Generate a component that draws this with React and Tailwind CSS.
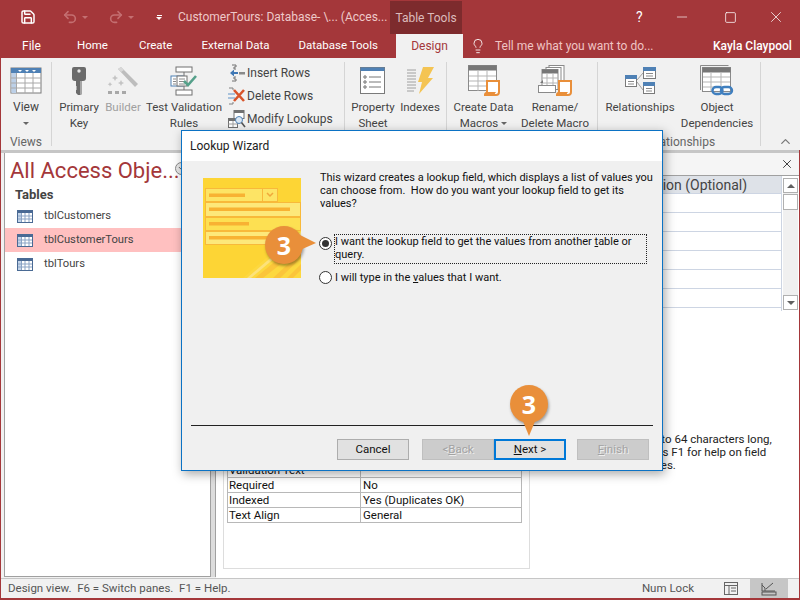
import React from 'react';
import { X, ChevronUp, ChevronLeft, Lightbulb, Minus, Square, Save, Undo2, Redo2 } from 'lucide-react';

const tabs = [
  { name: 'Home', className: 'ml-[37px]' },
  { name: 'Create', className: 'ml-[31px]' },
  { name: 'External Data', className: 'ml-[29px]' },
  { name: 'Database Tools', className: 'ml-[29px]' },
];

const fieldRows = ['', '', '', '', '', ''];

const propertyRows = [
  { label: 'Validation Text', value: '' },
  { label: 'Required', value: 'No' },
  { label: 'Indexed', value: 'Yes (Duplicates OK)' },
  { label: 'Text Align', value: 'General' },
];

const navItems = [
  { name: 'tblCustomers', active: false },
  { name: 'tblCustomerTours', active: true },
  { name: 'tblTours', active: false },
];

const TableIcon = () => (
  <svg width="32" height="28" viewBox="0 0 32 28">
    <rect x="1" y="1" width="30" height="25" fill="#fff" stroke="#7a7a7a" />
    <rect x="1" y="1" width="30" height="5" fill="#4f81b5" />
    <rect x="1.5" y="6" width="5" height="20" fill="#bcd0e8" />
    <path d="M1 11h30M1 16h30M1 21h30M6.500 6v20M15 6v20M23 6v20" stroke="#a8a8a8" fill="none" />
    <path d="M8 3h4l-2 2zM15 3h4l-2 2zM22 3h4l-2 2z" fill="#fff" />
  </svg>
);

const KeyIcon = () => (
  <svg width="16" height="30" viewBox="0 0 16 30">
    <path d="M3 1h10a2 2 0 0 1 2 2v9a3 3 0 0 1-3 3h-1v13l-2 1H7l-2-2v-3l1-1-1-1 1-1-1-1V15H4a3 3 0 0 1-3-3V3a2 2 0 0 1 2-2z" fill="#6b6b6b" />
    <circle cx="8" cy="5" r="1.700" fill="#e8e8e8" />
    <path d="M9 15h2v13l-2 1z" fill="#a6a6a6" />
  </svg>
);

const BuilderIcon = () => (
  <svg width="32" height="30" viewBox="0 0 32 30">
    <path d="M11 3l3-2 17 17-3 3z" fill="#bdbdbd" />
    <path d="M11 3l3-2 3 3-3 2z" fill="#d8d8d8" />
    <path d="M8 9l1 2 2 1-2 1-1 2-1-2-2-1 2-1zM14 14l1 2 2 1-2 1-1 2-1-2-2-1 2-1zM3 16l.8 1.500 1.500.8-1.500.8-.8 1.500-.8-1.500-1.500-.8 1.500-.8z" fill="#c4c4c4" />
    <rect x="1" y="25" width="4" height="3" fill="#a8a8a8" />
    <rect x="8" y="25" width="4" height="3" fill="#a8a8a8" />
    <rect x="15" y="25" width="4" height="3" fill="#a8a8a8" />
  </svg>
);

const ValidationIcon = () => (
  <svg width="28" height="30" viewBox="0 0 28 30">
    <rect x="6" y="1" width="16" height="5" fill="#fff" stroke="#707070" />
    <rect x="6" y="24" width="16" height="5" fill="#fff" stroke="#707070" />
    <path d="M14 6v18" stroke="#707070" />
    <rect x="1" y="10" width="12" height="10" fill="#fff" stroke="#4f81b5" />
    <rect x="7" y="10" width="10" height="10" fill="#fff" stroke="#707070" />
    <path d="M3 13h3M3 15.500h3M3 18h3M9 13h6M9 15.500h6M9 18h6" stroke="#8a8a8a" />
    <path d="M14 15l4 4 8-9" fill="none" stroke="#55a08a" strokeWidth="2.600" />
  </svg>
);

const InsertRowsIcon = () => (
  <svg width="16" height="18" viewBox="0 0 16 18">
    <path d="M3 1H7V3H5V5H7M3 17H7V15H5V13H7" fill="none" stroke="#707070" />
    <path d="M1 9l4-3.500V8h4v2H5v2.500z" fill="#3f78b5" />
    <rect x="10" y="8" width="6" height="2.500" fill="#8a8a8a" />
  </svg>
);

const DeleteRowsIcon = () => (
  <svg width="18" height="18" viewBox="0 0 18 18">
    <path d="M1 1h4M1 17h4M5 1v2M5 15v2" fill="none" stroke="#808080" />
    <rect x="0" y="6" width="7" height="2" fill="#a8c2dc" />
    <rect x="0" y="10" width="7" height="2" fill="#a8c2dc" />
    <path d="M6 3l10 11M16 3L6 14" stroke="#d8552b" strokeWidth="2.600" />
  </svg>
);

const ModifyLookupsIcon = () => (
  <svg width="18" height="18" viewBox="0 0 18 18">
    <rect x="6" y="0.500" width="10" height="8" fill="#fff" stroke="#707070" />
    <rect x="6" y="0.500" width="10" height="2.500" fill="#707070" />
    <rect x="0.500" y="8.500" width="9" height="9" fill="#fff" stroke="#707070" />
    <rect x="0.500" y="8.500" width="9" height="2.500" fill="#707070" />
    <path d="M0.500 14h9M5 11v6" stroke="#a0a0a0" />
    <circle cx="11" cy="10" r="3.500" fill="#dbe7f3" stroke="#4f81b5" />
    <path d="M13.500 12.500L17 17" stroke="#555" strokeWidth="1.600" />
  </svg>
);

const PropertySheetIcon = () => (
  <svg width="26" height="28" viewBox="0 0 26 28">
    <rect x="0.500" y="0.500" width="24" height="26" fill="#fff" stroke="#7a7a7a" />
    <rect x="0.500" y="0.500" width="24" height="3.500" fill="#4f81b5" />
    <circle cx="5" cy="10" r="1.200" fill="none" stroke="#666" />
    <circle cx="5" cy="15" r="1.200" fill="none" stroke="#666" />
    <circle cx="5" cy="20" r="1.200" fill="none" stroke="#666" />
    <path d="M9 10h12M9 15h12M9 20h12" stroke="#777" />
  </svg>
);

const IndexesIcon = () => (
  <svg width="28" height="30" viewBox="0 0 28 30">
    <path d="M1 4h9M1 7h9M1 10h9M1 13h9M1 16h9M1 19h9M1 22h9M1 25h7" stroke="#a0a0a0" />
    <path d="M17 1h11l-6 11h5L13 28l3-12h-4z" fill="#f4c453" />
  </svg>
);

const Scroll = () => (
  <>
    <path d="M3 0h12v11a3 3 0 0 1-3 3H1a2 2 0 0 1 2-2z" fill="#fff" stroke="#e98f3a" strokeWidth="2" />
    <path d="M0 14h10l2-3H2z" fill="#e98f3a" />
  </>
);

const CreateMacroIcon = () => (
  <svg width="32" height="32" viewBox="0 0 32 32">
    <rect x="0.500" y="0.500" width="28" height="25" fill="#fff" stroke="#8a8a8a" />
    <rect x="0.500" y="0.500" width="28" height="5" fill="#777" />
    <path d="M1 11h27M1 16h27M1 21h27M10 6v20M19 6v20" stroke="#b5b5b5" />
    <g transform="translate(16 16)"><Scroll /></g>
  </svg>
);

const RenameMacroIcon = () => (
  <svg width="34" height="32" viewBox="0 0 34 32">
    <rect x="11" y="0.500" width="15" height="22" fill="#fff" stroke="#8a8a8a" />
    <rect x="8" y="2.500" width="15" height="22" fill="#fff" stroke="#8a8a8a" />
    <rect x="4" y="4.500" width="16" height="20" fill="#fff" stroke="#8a8a8a" />
    <rect x="4" y="4.500" width="16" height="4" fill="#777" />
    <path d="M4 13h16M4 18h16M9 9v16M15 9v16" stroke="#b5b5b5" />
    <rect x="0.500" y="20.500" width="17" height="7" fill="#fff" stroke="#8a8a8a" />
    <path d="M2 18l3-3v3z" fill="#777" />
    <g transform="translate(18 16)"><Scroll /></g>
  </svg>
);

const MiniTable = ({ x, y, w, h }) => (
  <g>
    <rect x={x + 0.5} y={y + 0.5} width={w} height={h} fill="#fff" stroke="#7a7a7a" />
    <rect x={x + 0.5} y={y + 0.5} width={w} height="3" fill="#4f81b5" stroke="#4f81b5" />
    <path d={`M${x + 3} ${y + 6.5}h${w - 5}M${x + 3} ${y + 9}h${w - 5}`} stroke="#8a8a8a" />
  </g>
);

const RelationshipsIcon = () => (
  <svg width="32" height="28" viewBox="0 0 32 28">
    <path d="M13 13L19 6M13 15l6 8" stroke="#a0a0a0" fill="none" />
    <MiniTable x={1} y={8} w={11} h={11} />
    <MiniTable x={19} y={0} w={12} h={11} />
    <MiniTable x={19} y={15} w={11} h={11} />
  </svg>
);

const DependenciesIcon = () => (
  <svg width="34" height="31" viewBox="0 0 34 31">
    <path d="M0.500 25V0.500h28" fill="none" stroke="#8a8a8a" />
    <rect x="2.500" y="2.500" width="28" height="24" fill="#fff" stroke="#8a8a8a" />
    <rect x="2.500" y="2.500" width="28" height="5" fill="#777" />
    <path d="M3 12h27M3 17h27M3 22h27M11 8v18M21 8v18" stroke="#b5b5b5" />
    <rect x="12.500" y="22" width="10" height="7" rx="3.500" fill="none" stroke="#3f7fbf" strokeWidth="2.400" />
    <rect x="21" y="22" width="11" height="7" rx="3.500" fill="none" stroke="#3f7fbf" strokeWidth="2.400" />
  </svg>
);

const NavTableIcon = () => (
  <svg width="16" height="13" viewBox="0 0 16 13">
    <rect x="0.500" y="0.500" width="15" height="12" fill="#fff" stroke="#4a6a94" />
    <rect x="0.500" y="0.500" width="15" height="2.500" fill="#4a6a94" />
    <rect x="1" y="3" width="3" height="9" fill="#c4d5ea" />
    <path d="M1 6h14M1 9h14M4.500 3v9M8 3v9M12 3v9" stroke="#8aa3c4" />
  </svg>
);

const RibbonButton = ({ width, icon, lines, disabled, caret }) => (
  <div className={`${width} flex flex-col items-center`}>
    <div className="h-[37px] flex items-center justify-center">{icon}</div>
    <div className={`text-center text-[11.500px] leading-[16px] whitespace-nowrap ${disabled ? 'text-[#a0a0a0]' : 'text-[#444]'}`}>
      {lines.map((line, i) => (
        <div key={i}>
          {line}
          {caret && i === lines.length - 1 && (
            <span className="inline-block ml-[3px] mb-[2px] w-0 h-0 border-x-[3px] border-x-transparent border-t-[3px] border-t-[#666]" />
          )}
        </div>
      ))}
    </div>
  </div>
);

const SmallButton = ({ icon, label }) => (
  <div className="h-[23px] flex items-center gap-[1px]">
    <div className="w-[18px] flex justify-center">{icon}</div>
    <span className="text-[12px] text-[#444] whitespace-nowrap">{label}</span>
  </div>
);

const Group = ({ width, label, children }) => (
  <div className={`${width} relative flex shrink-0 items-start border-r border-[#d5d5d5] my-[4px] h-[84px]`}>
    {children}
    {label && <div className="absolute bottom-[-4px] left-0 right-0 text-center text-[12px] leading-[16px] text-[#666]">{label}</div>}
  </div>
);

const Radio = ({ checked }) => (
  <span className="w-[13px] h-[13px] rounded-full border border-[#333] bg-white flex items-center justify-center shrink-0">
    {checked && <span className="w-[7px] h-[7px] rounded-full bg-[#333]" />}
  </span>
);

const DialogButton = ({ children, variant }) => {
  const styles = {
    normal: 'bg-[#e1e1e1] border border-[#adadad] text-[#111]',
    disabled: 'bg-[#cccccc] border border-[#bfbfbf] text-[#a3a3a3] [text-shadow:1px_1px_0_#eee]',
    focus: 'bg-[#e1e1e1] border-2 border-[#0078d7] text-[#111]',
  };
  return (
    <div className={`w-[72px] h-[21px] flex items-center justify-center text-[11.500px] ${styles[variant]}`}>{children}</div>
  );
};

// wizard art on the left of the dialog
const WizardArt = () => (
  <svg width="98" height="100" viewBox="0 0 98 100" className="shrink-0">
    <rect width="98" height="100" fill="#fdd535" />
    <path d="M98 50v50H40z" fill="#fdd83f" />
    <path d="M98 62L52 100h8l38-30zM98 74L70 100h7l21-20zM98 86L84 100h6l8-8z" fill="#fbc53a" />
    <path d="M98 54L44 100h4l50-42z" fill="#fde27a" />
    <rect x="2.500" y="10.500" width="57" height="13" fill="#fde465" stroke="#f8b93a" />
    <rect x="59.500" y="10.500" width="15" height="13" fill="#fde465" stroke="#f8b93a" />
    <path d="M64 15l3 3 3-3" fill="none" stroke="#f0a83a" strokeWidth="1.500" />
    <rect x="6" y="15.500" width="36" height="3.500" fill="#f8b233" />
    <rect x="2.500" y="24.500" width="95" height="14" fill="#fde87a" stroke="#f8b93a" />
    <rect x="6" y="29.500" width="81" height="3.500" fill="#f8b233" />
    <rect x="2.500" y="39.500" width="95" height="13" fill="#fde052" stroke="#f8b93a" />
    <rect x="6" y="44" width="40" height="3.500" fill="#f8b233" />
    <rect x="2.500" y="53.500" width="80" height="13" fill="#fde87a" stroke="#f8b93a" />
    <rect x="6" y="58" width="60" height="3.500" fill="#f8b233" />
  </svg>
);

const Badge = () => (
  <div className="w-[38px] h-[38px] rounded-full bg-[#e98f3a] flex items-center justify-center text-white text-[25px] font-bold font-['Open_Sans',sans-serif] leading-none shadow-[1px_2px_3px_rgba(0,0,0,0.35)]">
    3
  </div>
);

export default function App() {
  return (
    <div className="relative w-[800px] h-[600px] overflow-hidden bg-[#a4373a] flex flex-col font-['Roboto',sans-serif]">
      {/* Title bar */}
      <div className="h-[34px] flex items-center shrink-0 relative">
        <Save size={16} className="ml-[20px] text-white" strokeWidth={2.2} />
        <Undo2 size={16} className="ml-[26px] text-[#c46f71]" strokeWidth={2.4} />
        <span className="ml-[4px] w-0 h-0 border-x-[3px] border-x-transparent border-t-[3px] border-t-[#c46f71]" />
        <Redo2 size={16} className="ml-[20px] text-[#c46f71]" strokeWidth={2.4} />
        <span className="ml-[4px] w-0 h-0 border-x-[3px] border-x-transparent border-t-[3px] border-t-[#c46f71]" />
        <div className="ml-[22px] flex flex-col items-center gap-[1px]">
          <span className="w-[5px] h-[1px] bg-white" />
          <span className="w-0 h-0 border-x-[3px] border-x-transparent border-t-[3px] border-t-white" />
        </div>
        <span className="ml-[16px] w-[212px] text-[12px] text-[#eec9c9] whitespace-nowrap">CustomerTours: Database- \... (Acces...</span>
        <div className="w-[72px] h-[33px] mt-[1px] bg-[#7d2b2d] flex items-center justify-center text-[12px] text-[#dcbcbc] whitespace-nowrap">Table Tools</div>
        <span className="ml-[174px] text-[14px] text-white">?</span>
        <Minus size={16} className="ml-[31px] text-white" strokeWidth={1} />
        <Square size={13} className="ml-[34px] text-white" strokeWidth={1.4} />
        <X size={18} className="ml-[30px] text-white" strokeWidth={1} />
      </div>

      {/* Tabs */}
      <div className="h-[24px] flex items-center shrink-0 text-[12px] text-white">
        <span className="ml-[22px] w-[18px]">File</span>
        {tabs.map((tab) => (
          <span key={tab.name} className={`${tab.className} text-[11.500px] whitespace-nowrap`}>{tab.name}</span>
        ))}
        <div className="ml-auto flex items-center h-full">
          <div className="w-[67px] h-full bg-[#f1f1f1] text-[#a4373a] flex items-center justify-center">Design</div>
          <Lightbulb size={16} className="ml-[7px] text-white" strokeWidth={1.3} />
          <span className="ml-[9px] w-[218px] text-[#f0c4c4] whitespace-nowrap">Tell me what you want to do...</span>
          <span className="w-[87px] font-medium whitespace-nowrap">Kayla Claypool</span>
        </div>
      </div>

      {/* Ribbon */}
      <div className="h-[92px] ml-[1px] bg-[#f1f1f1] flex shrink-0 relative">
        <Group width="w-[51px]" label="Views">
          <div className="w-[50px] flex flex-col items-center">
            <div className="h-[37px] flex items-center"><TableIcon /></div>
            <span className="text-[12px] leading-[16px] text-[#444]">View</span>
            <span className="mt-[7px] w-0 h-0 border-x-[3px] border-x-transparent border-t-[3px] border-t-[#666]" />
          </div>
        </Group>
        <Group width="w-[293px]">
          <div className="w-[2px]" />
          <RibbonButton width="w-[50px]" icon={<KeyIcon />} lines={['Primary', 'Key']} />
          <RibbonButton width="w-[38px]" icon={<BuilderIcon />} lines={['Builder']} disabled />
          <RibbonButton width="w-[84px]" icon={<ValidationIcon />} lines={['Test Validation', 'Rules']} />
          <div className="ml-[2px] flex flex-col mt-[-1px]">
            <SmallButton icon={<InsertRowsIcon />} label="Insert Rows" />
            <SmallButton icon={<DeleteRowsIcon />} label="Delete Rows" />
            <SmallButton icon={<ModifyLookupsIcon />} label="Modify Lookups" />
          </div>
        </Group>
        <Group width="w-[102px]">
          <div className="w-[3px]" />
          <RibbonButton width="w-[50px]" icon={<PropertySheetIcon />} lines={['Property', 'Sheet']} />
          <RibbonButton width="w-[44px]" icon={<IndexesIcon />} lines={['Indexes']} />
        </Group>
        <Group width="w-[151px]">
          <RibbonButton width="w-[73px]" icon={<CreateMacroIcon />} lines={['Create Data', 'Macros']} caret />
          <RibbonButton width="w-[70px]" icon={<RenameMacroIcon />} lines={['Rename/', 'Delete Macro']} />
        </Group>
        <Group width="w-[163px]" label="Relationships">
          <RibbonButton width="w-[84px]" icon={<RelationshipsIcon />} lines={['Relationships']} />
          <RibbonButton width="w-[70px]" icon={<DependenciesIcon />} lines={['Object', 'Dependencies']} />
        </Group>
        <ChevronUp size={15} className="absolute right-[7px] bottom-[1px] text-[#777]" strokeWidth={2} />
      </div>

      {/* Work area */}
      <div className="h-[428px] ml-[1px] mr-[1px] bg-[#f1f1f1] border-t-[3px] border-[#c6c6c6] flex shrink-0">
        {/* Navigation pane */}
        <div className="ml-[3px] w-[207px] h-[424px] bg-white border border-t-0 border-[#a0a0a0] flex flex-col shrink-0">
          <div className="h-[34px] pl-[5px] flex items-center text-[22px] text-[#a4373a] whitespace-nowrap">
            <span className="w-[165px]">All Access Obje...</span>
            <span className="w-[13px] h-[13px] rounded-full border border-[#888] bg-[#e8e8e8] flex items-center justify-center mt-[-3px]">
              <ChevronLeft size={9} className="text-[#555] -rotate-90" strokeWidth={2.5} />
            </span>
          </div>
          <div className="pl-[10px] h-[16px] flex items-center text-[13px] font-bold text-[#444]">Tables</div>
          <div className="flex flex-col mt-[1px]">
            {navItems.map((item) => (
              <div key={item.name} className={`h-[24px] pl-[12px] flex items-center gap-[11px] text-[11.200px] text-[#444] ${item.active ? 'bg-[#ffc0c0]' : ''}`}>
                <NavTableIcon />
                <span>{item.name}</span>
              </div>
            ))}
          </div>
        </div>
        <div className="w-[5px] h-[424px] bg-[#dcdcdc] border-r border-[#a0a0a0] shrink-0" />

        {/* Design surface */}
        <div className="flex-1 h-[425px] bg-white flex flex-col">
          <div className="h-[23px] bg-[#f5f5f5] border-b border-[#a0a0a0] flex items-center justify-end pr-[5px] shrink-0">
            <X size={14} className="text-[#333]" strokeWidth={1.6} />
          </div>
          <div className="h-[135px] flex shrink-0">
            <div className="w-[566px] border-r border-[#cdd5e3]">
              <div className="h-[18px] bg-[#dee2e8] border-b border-[#cdd5e3] flex justify-end text-[14px] leading-[19px] text-[#444]">
                <span className="w-[204px] text-center whitespace-nowrap">Description (Optional)</span>
              </div>
              {fieldRows.map((_, i) => (
                <div key={i} className="h-[19px] border-b border-[#cdd5e3]" />
              ))}
            </div>
            <div className="ml-[1px] w-[15px] h-[132px] mt-[2px] bg-[#f0f0f0] flex flex-col">
              <div className="h-[15px] bg-white border border-[#b0b0b0] flex items-center justify-center">
                <span className="w-0 h-0 border-x-[4px] border-x-transparent border-b-[4px] border-b-[#606060]" />
              </div>
              <div className="h-[16px] mt-[1px] bg-white border border-[#b0b0b0]" />
              <div className="h-[15px] mt-auto bg-white border border-[#b0b0b0] flex items-center justify-center">
                <span className="w-0 h-0 border-x-[4px] border-x-transparent border-t-[4px] border-t-[#606060]" />
              </div>
            </div>
          </div>

          {/* Field properties */}
          <div className="flex-1 flex">
            <div className="ml-[7px] w-[307px] h-[258px] border-x border-b border-[#dddddd] flex flex-col justify-end pb-[45px] pl-[3px] shrink-0">
              <div className="w-[295px] border-t border-l border-[#b8b8b8] text-[11.500px] text-[#111]">
                {propertyRows.map((row) => (
                  <div key={row.label} className="h-[15px] flex leading-[14px] border-b border-[#b8b8b8]">
                    <span className="w-[133px] pl-[1px] border-r border-[#b8b8b8] whitespace-nowrap">{row.label}</span>
                    <span className="flex-1 pl-[2px] border-r border-[#b8b8b8] whitespace-nowrap">{row.value}</span>
                  </div>
                ))}
              </div>
            </div>
            <div className="w-[254px] mt-[122px] text-center text-[11.500px] leading-[13px] text-[#222]">
              A field name can be up to 64 characters long, including spaces. Press F1 for help on field names.
            </div>
          </div>
        </div>
      </div>

      {/* Status bar */}
      <div className="h-[20px] ml-[1px] mr-[1px] bg-[#f1f1f1] border-t border-[#c6c6c6] flex items-center text-[11.500px] text-[#555] shrink-0">
        <span className="ml-[7px]">Design view.&nbsp; F6 = Switch panes.&nbsp; F1 = Help.</span>
        <span className="ml-auto">Num Lock</span>
        <svg width="15" height="14" viewBox="0 0 15 14" className="ml-[30px]">
          <rect x="0.500" y="0.500" width="13" height="12" fill="none" stroke="#666" />
          <path d="M0.500 3.500h13M5 3.500v9M7 6h5M7 9h5" stroke="#666" fill="none" />
        </svg>
        <div className="ml-[11px] mr-[11px] w-[38px] h-[19px] bg-[#c6c6c6] flex items-center justify-center">
          <svg width="16" height="14" viewBox="0 0 16 14">
            <path d="M1 1v8h13M1 3l3 3v3M5 7L12 1" stroke="#555" fill="none" />
            <rect x="1" y="10" width="14" height="3" fill="none" stroke="#555" />
          </svg>
        </div>
      </div>

      {/* Lookup Wizard dialog */}
      <div className="absolute left-[181px] top-[130px] w-[482px] h-[341px] bg-[#f0f0f0] border border-[#0b72c4] shadow-[2px_3px_10px_rgba(0,0,0,0.35)] flex flex-col">
        <div className="h-[30px] bg-white pl-[8px] flex items-center text-[12px] text-[#222] shrink-0">Lookup Wizard</div>
        <div className="flex-1 flex flex-col">
          <div className="flex pt-[17px] pl-[21px]">
            <WizardArt />
            <div className="ml-[19px] mt-[-7px] text-[11px] text-[#111]">
              <p className="w-[340px] leading-[13px]">
                This wizard creates a lookup field, which displays a list of values you can choose from.&nbsp; How do you want your lookup field to get its values?
              </p>
              <div className="mt-[24px] ml-[-1px] flex items-start gap-[2px]">
                <span className="mt-[3px]"><Radio checked /></span>
                <div className="w-[313px] h-[30px] border border-dotted border-[#222] leading-[13px]">
                  I want the lookup field to get the values from another <u>t</u>able or query.
                </div>
              </div>
              <div className="mt-[7px] ml-[-1px] flex items-center gap-[3px] leading-[13px]">
                <Radio />
                <span>I will type in the <u>v</u>alues that I want.</span>
              </div>
            </div>
          </div>
          <div className="mt-auto mx-[9px] border-t border-[#222] h-[45px] flex items-start pt-[13px] pl-[146px]">
            <DialogButton variant="normal">Cancel</DialogButton>
            <div className="ml-[13px]"><DialogButton variant="disabled">&lt; <u>B</u>ack</DialogButton></div>
            <DialogButton variant="focus"><u>N</u>ext &gt;</DialogButton>
            <div className="ml-[11px]"><DialogButton variant="disabled"><u>F</u>inish</DialogButton></div>
          </div>
        </div>
      </div>

      {/* Step callouts */}
      <div className="absolute left-[265px] top-[226px] flex items-center">
        <Badge />
        <svg width="16" height="16" viewBox="0 0 16 16" className="ml-[-3px] mt-[-4px]">
          <path d="M0 0L16 8 0 15z" fill="#e98f3a" />
        </svg>
      </div>
      <div className="absolute left-[510px] top-[385px] flex flex-col items-center">
        <Badge />
        <svg width="14" height="17" viewBox="0 0 14 17" className="mt-[-4px]">
          <path d="M0 0h14L7 17z" fill="#e98f3a" />
        </svg>
      </div>
    </div>
  );
}
